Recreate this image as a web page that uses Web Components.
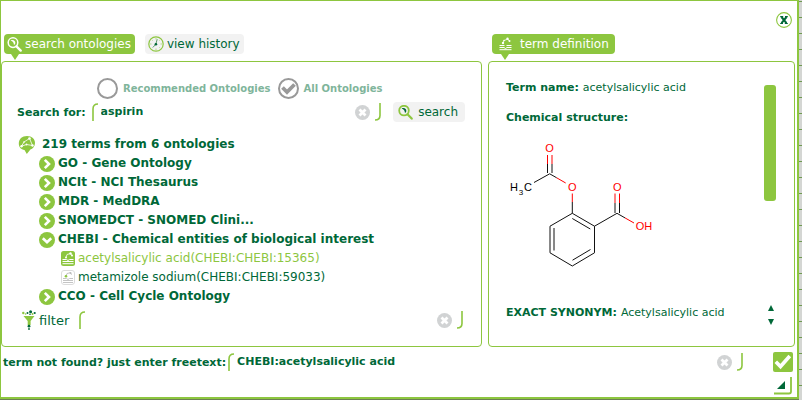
<!DOCTYPE html>
<html lang="en">
<head>
<meta charset="utf-8">
<title>Ontology search</title>
<style>
  html { --leaf: #8dc63f; --forest: #006838; --sage: #7fb59b; --mist: #f2f2f2; }
  body {
    margin: 0;
    padding: 0 3px 1px 0;
    box-sizing: border-box;
    min-height: 100vh;
    display: flex;
    background: linear-gradient(#6d7f55, #6d7f55) left bottom / calc(100% - 3px) 1px no-repeat,
      repeating-linear-gradient(#d4d6d3 0 1px, #6f9a51 1px 2px, #d4d6d3 2px 16px);
    color: var(--forest);
    font: 11px/15px "DejaVu Sans", Verdana, sans-serif;
  }
</style>
</head>
<body>
<onto-dialog></onto-dialog>

<script>
const RESET = `
  * { box-sizing: border-box; }
  button { margin: 0; padding: 0; border: 0; background: none; color: inherit; font: inherit; cursor: pointer; }
  svg { display: block; flex: none; }
`;

const ICONS = {
  magnifierWhite: `<svg width="15" height="15" viewBox="0 0 15 15" fill="none"><circle cx="6" cy="5.6" r="4.800" stroke="#fff" stroke-width="1.500"/><path d="M3.600 3.400C6 2.300 8.800 3.500 8.300 6.500L7 8.300C7 6 6 4 3.600 3.400z" fill="#fff"/><path d="M9.500 9.300l4.200 4.300" stroke="#fff" stroke-width="2.400" stroke-linecap="round"/></svg>`,
  magnifier: `<svg width="15" height="15" viewBox="0 0 15 15" fill="none"><circle cx="6" cy="5.600" r="4.800" stroke="#8dc63f" stroke-width="1.800"/><path d="M3.600 3.400C6 2.300 8.800 3.500 8.300 6.500L7 8.300C7 6 6 4 3.600 3.400z" fill="#006838"/><path d="M9.500 9.300l4.200 4.300" stroke="#8dc63f" stroke-width="2.200" stroke-linecap="round"/></svg>`,
  clock: `<svg width="16" height="16" viewBox="0 0 16 16" fill="none"><circle cx="8" cy="8" r="7.200" stroke="#8dc63f" stroke-width="1.200"/><path d="M8 2v1.500M8 12.500V14M2 8h1.500M12.500 8H14M3.800 3.800l.8.8M12.200 12.200l-.8-.8M12.200 3.800l-.8.8" stroke="#b5d98a"/><path d="M9.200 3.200L7.800 8.300 4.800 11.500" stroke="#5f9d6a"/><circle cx="7.900" cy="8.200" r="1.300" fill="#006838"/></svg>`,
  bookWhite: `<svg width="13" height="14" viewBox="0 0 13 14" fill="none" stroke="#fff"><path d="M.5 8.500h5M7.500 8.500h5M.5 10.500h4.500l1.500 1 1.500-1h4.500M.5 12.700h12"/><path d="M4 6L5 3.500l4-1.500 1.500 2.500" stroke-width=".8"/><g fill="#fff" stroke="none"><circle cx="4" cy="6" r="1.200"/><circle cx="5" cy="3.500" r=".8"/><circle cx="8.500" cy="1.800" r="1.200"/><circle cx="10.500" cy="4" r="1"/></g></svg>`,
  right: `<svg width="16" height="16" viewBox="0 0 16 16"><circle cx="8" cy="8" r="8" fill="#8dc63f"/><path d="M5.800 3.800L10 8l-4.200 4.200" fill="none" stroke="#fff" stroke-width="2.600"/></svg>`,
  down: `<svg width="16" height="16" viewBox="0 0 16 16"><circle cx="8" cy="8" r="8" fill="#8dc63f"/><path d="M3.800 6.200L8 10.300l4.200-4.100" fill="none" stroke="#fff" stroke-width="2.600"/></svg>`,
  termOn: `<svg width="14" height="15" viewBox="0 0 14 15"><rect width="14" height="15" rx="2.500" fill="#8dc63f"/><path d="M1.500 8.500h4l1.500 1 1.500-1h4M1.500 10.500h11M1.500 12.700h11" fill="none" stroke="#fff"/><path d="M5 6.500L6 3.500l3.500-1 1.500 2" fill="none" stroke="#fff" stroke-width=".8"/><circle cx="5" cy="6.500" r="1" fill="#fff"/><circle cx="9.500" cy="2.500" r="1.200" fill="#fff"/><circle cx="11" cy="4.500" r="1" fill="#fff"/></svg>`,
  termOff: `<svg width="14" height="15" viewBox="0 0 14 15"><rect x=".5" y=".5" width="13" height="14" rx="2.500" fill="#fff" stroke="#dcdcdc"/><path d="M2 8.500h3.500l1.500 1 1.500-1H12M2 10.500h10M2 12.500h10" fill="none" stroke="#c4c4c4"/><path d="M5 6.200L6 3.500l3.500-.8 1 2" fill="none" stroke="#bbb" stroke-width=".9"/><circle cx="5" cy="6.200" r="1.300" fill="#8dc63f"/><circle cx="9.500" cy="3" r="1" fill="#bbb"/></svg>`,
  root: `<svg width="18" height="20" viewBox="0 0 18 20"><path d="M9 1c5 0 8 3 8 7 0 3.500-2.200 5.600-4.600 6.600L8.800 19 6.500 15C3 14.600.8 12 .8 8.500.8 4 4 1 9 1z" fill="#8dc63f"/><path d="M3.500 11.200L6 7l5.500-3.500 3 7-6-1L3.500 11.200" fill="none" stroke="#fff" stroke-width=".8"/><g fill="#fff"><circle cx="3.500" cy="11.200" r="1.200"/><circle cx="6" cy="7" r=".8"/><circle cx="11.500" cy="3.500" r="1.300"/><circle cx="14.500" cy="10.500" r="1.200"/><circle cx="8.500" cy="9.500" r=".9"/></g></svg>`,
  funnel: `<svg width="14" height="20" viewBox="0 0 14 20"><path d="M1.500 6h11L8.600 11v4H5.700v-4z" fill="#8dc63f"/><g fill="#8dc63f"><circle cx="1.300" cy="3" r="1.200"/><circle cx="3.600" cy="4" r=".8"/><circle cx="10.500" cy="4" r="1"/></g><g fill="#006838"><circle cx="5.500" cy="3" r="1"/><circle cx="8.600" cy="1.700" r="1.500"/><circle cx="12.700" cy="3" r="1.100"/><circle cx="8" cy="4.200" r=".8"/><circle cx="7" cy="16.200" r="1.400"/><circle cx="7" cy="19" r=".9"/></g></svg>`,
  clear: `<svg width="15" height="15" viewBox="0 0 15 15"><circle cx="7.500" cy="7.500" r="7.500" fill="#d1d3d4"/><path d="M4.500 4.500l6 6M10.500 4.500l-6 6" stroke="#fff" stroke-width="2.800"/></svg>`,
  close: `<svg width="16" height="16" viewBox="0 0 16 16"><circle cx="8" cy="8" r="7.400" fill="#fff" stroke="#8dc63f" stroke-width="1.100"/><path d="M5.500 5l5 6.200M10.500 5l-5 6.200" stroke="#006838" stroke-width="2"/><path d="M4.200 4.700h3M9 4.700h2.800M4.200 11.500H7M8.800 11.500h3" stroke="#006838" stroke-width="1.200"/></svg>`,
  accept: `<svg width="20" height="20" viewBox="0 0 20 20"><rect width="20" height="20" rx="2" fill="#8dc63f"/><path d="M2.800 9.800l4.700 4.700L16.800 4" fill="none" stroke="#fff" stroke-width="3.600"/></svg>`,
  grip: `<svg width="18" height="18" viewBox="0 0 18 18"><path d="M11 4v8H3z" fill="#006838"/><path d="M17 0v14.500q0 2-2 2H0" fill="none" stroke="#8dc63f" stroke-width="1.800"/></svg>`,
  open: `<svg width="6" height="18" viewBox="0 0 6 18"><path d="M1 18V6Q1 1 6 1" fill="none" stroke="#8dc63f" stroke-width="1.600"/></svg>`,
  shut: `<svg width="6" height="18" viewBox="0 0 6 18"><path d="M5 0v12.500q0 4.500-5 4.500" fill="none" stroke="#8dc63f" stroke-width="1.600"/></svg>`,
  up: `<svg width="6" height="6" viewBox="0 0 6 6"><path d="M3 0l3 6H0z" fill="#006838"/></svg>`,
  dn: `<svg width="6" height="6" viewBox="0 0 6 6"><path d="M3 6l3-6H0z" fill="#006838"/></svg>`
};

class Base extends HTMLElement {
  connectedCallback() {
    if (this.shadowRoot) return;
    const root = this.attachShadow({ mode: "open" });
    root.innerHTML = `<style>${RESET}${this.css()}</style>${this.html()}`;
  }
}

customElements.define("bubble-tab", class extends Base {
  css() { return `
    :host { display: block; }
    button { position: relative; display: flex; align-items: center; gap: 3px; height: 20px; padding: 0 4px 0 3px;
      border-radius: 4px; background: var(--mist); font-size: 12px; line-height: 20px; white-space: nowrap; }
    :host([active]) button { background: var(--leaf); color: #fff; }
    :host([active]) button::after { content: ""; position: absolute; left: 7px; top: 100%;
      border: 4px solid transparent; border-top: 6px solid var(--leaf); border-bottom: 0; }
    :host([wide]) button { gap: 8px; padding: 0 6px 0 7px; }
    :host([wide]) button::after { left: 9px; }
  `; }
  html() { return `<button type="button">${ICONS[this.getAttribute("icon")]}<span><slot></slot></span></button>`; }
});

customElements.define("onto-panel", class extends Base {
  css() { return `
    :host { display: flex; flex-direction: column; min-width: 0; border: 1px solid var(--leaf); border-radius: 4px; }
  `; }
  html() { return `<slot></slot>`; }
});

customElements.define("bracket-field", class extends Base {
  css() { return `
    :host { display: flex; align-items: center; min-width: 0; height: 20px; }
    label { display: flex; align-items: center; gap: 3px; font-weight: bold; white-space: nowrap; }
    :host([plain]) label { font-weight: normal; font-size: 13px; }
    .open { margin-left: var(--lead, 6px); }
    input { flex: 1; min-width: 0; height: 18px; margin: 0; padding: 0 3px; border: 0; outline: 0; background: none;
      color: inherit; font: bold 11px/18px "DejaVu Sans", Verdana, sans-serif; }
    button { margin-right: 5px; }
  `; }
  html() {
    const icon = this.getAttribute("icon");
    return `<label for="field">${icon ? ICONS[icon] : ""}${this.getAttribute("label")}</label>
      <span class="open">${ICONS.open}</span>
      <input id="field" type="text" value="${this.getAttribute("value") || ""}">
      <button type="button" aria-label="Clear">${ICONS.clear}</button>
      ${ICONS.shut}`;
  }
});

customElements.define("scope-choice", class extends Base {
  css() { return `
    :host { display: flex; align-items: center; gap: 7px; color: var(--sage); }
    label { display: flex; align-items: center; gap: 5px; font-weight: bold; font-size: 10px; line-height: 20px; white-space: nowrap; }
    .dot { position: relative; display: block; width: 21px; height: 21px; }
    input { appearance: none; display: block; width: 21px; height: 21px; margin: 0; border: 2px solid #999; border-radius: 50%; }
    .dot svg { position: absolute; inset: 0; display: none; pointer-events: none; }
    input:checked + svg { display: block; }
  `; }
  html() {
    const tick = `<svg width="21" height="21" viewBox="0 0 21 21"><path d="M4.500 9.500l4.500 4.500 7.500-7.500" fill="none" stroke="#999" stroke-width="3.800"/></svg>`;
    return ["Recommended Ontologies", "All Ontologies"].map((t, i) =>
      `<label><span class="dot"><input type="radio" name="scope"${i ? " checked" : ""}>${tick}</span>${t}</label>`).join("");
  }
});

customElements.define("tree-row", class extends Base {
  css() { return `
    :host { display: block; }
    button { display: flex; align-items: center; gap: 3px; height: 19px; font-weight: bold; font-size: 12px; line-height: 19px; text-align: left; white-space: nowrap; }
    :host([kind=root]) button { gap: 6px; }
    :host([kind=term]) button { font-weight: normal; padding-left: 22px; }
    :host([kind=branch]) { padding-left: 21px; }
    :host([kind=term]) { padding-left: 21px; }
    :host([selected]) button { color: var(--leaf); }
  `; }
  html() { return `<button type="button">${ICONS[this.getAttribute("icon")]}<span><slot></slot></span></button>`; }
});

customElements.define("molecule-view", class extends Base {
  css() { return `
    :host { display: block; }
    text { font: 11px "Liberation Sans", Arial, sans-serif; text-anchor: middle; }
  `; }
  html() { return `<svg width="150" height="132" viewBox="506 140 150 132" role="img" aria-label="Structure of acetylsalicylic acid">
    <g fill="none" stroke="#111">
      <path d="M534 182.500l15.700-8.700 7 4M547.500 173v-9M552 173v-9M572.300 202v11.300l22.200 12.900v26.600l-22.200 13.200-22.300-13.200v-26.600l22.300-12.900M572.300 218.500l18 10.500M590.500 249.500l-18 10.700M554 228v22.500M594.500 226.200l22.500-12.900 8 4.600M615 213v-10M619.500 213v-10"/>
    </g>
    <g fill="none" stroke="#f00">
      <path d="M556.700 177.800l9 5.200M547.500 164v-9M552 164v-9M572.300 193.500v8.500M625 217.900l9 5.100M615 203v-9.500M619.500 203v-9.500"/>
    </g>
    <g fill="#f00"><text x="549.500" y="152">O</text><text x="572.300" y="191">O</text><text x="617.300" y="191">O</text><text x="644" y="230">OH</text></g>
    <text x="514" y="191">H</text><text x="521" y="195" style="font-size:8px">3</text><text x="528" y="191">C</text>
  </svg>`; }
});

customElements.define("term-definition", class extends Base {
  css() { return `
    :host { flex: 1; display: flex; justify-content: space-between; padding: 18px 18px 18px 17px; }
    dl, dt, dd { margin: 0; }
    .item { display: flex; flex-wrap: wrap; column-gap: 4px; }
    dt { font-weight: bold; }
    dl { display: flex; flex-direction: column; gap: 15px; }
    .structure { display: block; }
    .structure dd { margin-top: 15px; }
    .synonym { margin-top: 18px; }
    .rail { display: flex; flex-direction: column; align-items: center; padding-top: 5px; }
    .thumb { width: 12px; height: 116px; border-radius: 3px; background: var(--leaf); }
    .steps { display: flex; flex-direction: column; gap: 8px; margin-top: auto; padding: 0 0 3px 2px; }
    .steps button { display: block; }
  `; }
  html() { return `<dl>
      <div class="item"><dt>Term name:</dt><dd>acetylsalicylic acid</dd></div>
      <div class="structure"><dt>Chemical structure:</dt><dd><molecule-view></molecule-view></dd></div>
      <div class="item synonym"><dt>EXACT SYNONYM:</dt><dd>Acetylsalicylic acid</dd></div>
    </dl>
    <div class="rail"><div class="thumb"></div>
      <div class="steps"><button type="button" aria-label="Scroll up">${ICONS.up}</button><button type="button" aria-label="Scroll down">${ICONS.dn}</button></div>
    </div>`; }
});

customElements.define("onto-dialog", class extends Base {
  css() { return `
    :host { flex: 1; min-width: 0; display: flex; flex-direction: column; background: #fff;
      border: 1px solid var(--leaf); border-width: 1px 2px 2px 1px; }
    .columns { display: grid; grid-template-columns: minmax(0, 481fr) minmax(0, 307fr); column-gap: 6px; padding-right: 2px; }
    .bar { display: flex; justify-content: flex-end; padding: 5px 5px 0 0; height: 33px; }
    .tabs { display: flex; gap: 10px; padding: 0 3px 7px; }
    .right { padding-left: 4px; }
    .panels { flex: 1; }
    .search { flex: 1; padding: 16px 16px 10px 15px; display: flex; flex-direction: column; }
    scope-choice { padding-left: 80px; }
    .query { display: flex; align-items: center; gap: 12px; margin-top: 3px; }
    .query bracket-field { flex: 1; }
    .go { display: flex; align-items: center; gap: 5px; height: 20px; padding: 0 7px 0 5px; border-radius: 4px;
      background: var(--mist); font-size: 12px; line-height: 20px; }
    .tree { margin: 13px 0 4px; padding-left: 1px; }
    .filter { --lead: 10px; padding: 0 2px 0 5px; }
    .foot { display: flex; align-items: center; padding: 5px 4px 0 2px; gap: 30px; }
    .foot bracket-field { flex: 1; --lead: 2px; }
    .corner { display: flex; justify-content: flex-end; padding: 5px 5px 2px; }
  `; }
  html() { return `
    <div class="bar"><button type="button" aria-label="Close">${ICONS.close}</button></div>
    <div class="columns">
      <div class="tabs"><bubble-tab active icon="magnifierWhite">search ontologies</bubble-tab><bubble-tab icon="clock">view history</bubble-tab></div>
      <div class="tabs right"><bubble-tab active wide icon="bookWhite">term definition</bubble-tab></div>
    </div>
    <div class="columns panels">
      <onto-panel><div class="search">
        <scope-choice></scope-choice>
        <div class="query"><bracket-field label="Search for:" value="aspirin"></bracket-field><button class="go" type="button">${ICONS.magnifier}search</button></div>
        <div class="tree">
          <tree-row kind="root" icon="root">219 terms from 6 ontologies</tree-row>
          <tree-row kind="branch" icon="right">GO - Gene Ontology</tree-row>
          <tree-row kind="branch" icon="right">NCIt - NCI Thesaurus</tree-row>
          <tree-row kind="branch" icon="right">MDR - MedDRA</tree-row>
          <tree-row kind="branch" icon="right">SNOMEDCT - SNOMED Clini...</tree-row>
          <tree-row kind="branch" icon="down">CHEBI - Chemical entities of biological interest</tree-row>
          <tree-row kind="term" icon="termOn" selected>acetylsalicylic acid(CHEBI:CHEBI:15365)</tree-row>
          <tree-row kind="term" icon="termOff">metamizole sodium(CHEBI:CHEBI:59033)</tree-row>
          <tree-row kind="branch" icon="right">CCO - Cell Cycle Ontology</tree-row>
        </div>
        <bracket-field class="filter" plain icon="funnel" label="filter"></bracket-field>
      </div></onto-panel>
      <onto-panel><term-definition></term-definition></onto-panel>
    </div>
    <div class="foot"><bracket-field label="term not found? just enter freetext:" value="CHEBI:acetylsalicylic acid"></bracket-field><button type="button" aria-label="Accept">${ICONS.accept}</button></div>
    <div class="corner">${ICONS.grip}</div>`; }
});
</script>
</body>
</html>
